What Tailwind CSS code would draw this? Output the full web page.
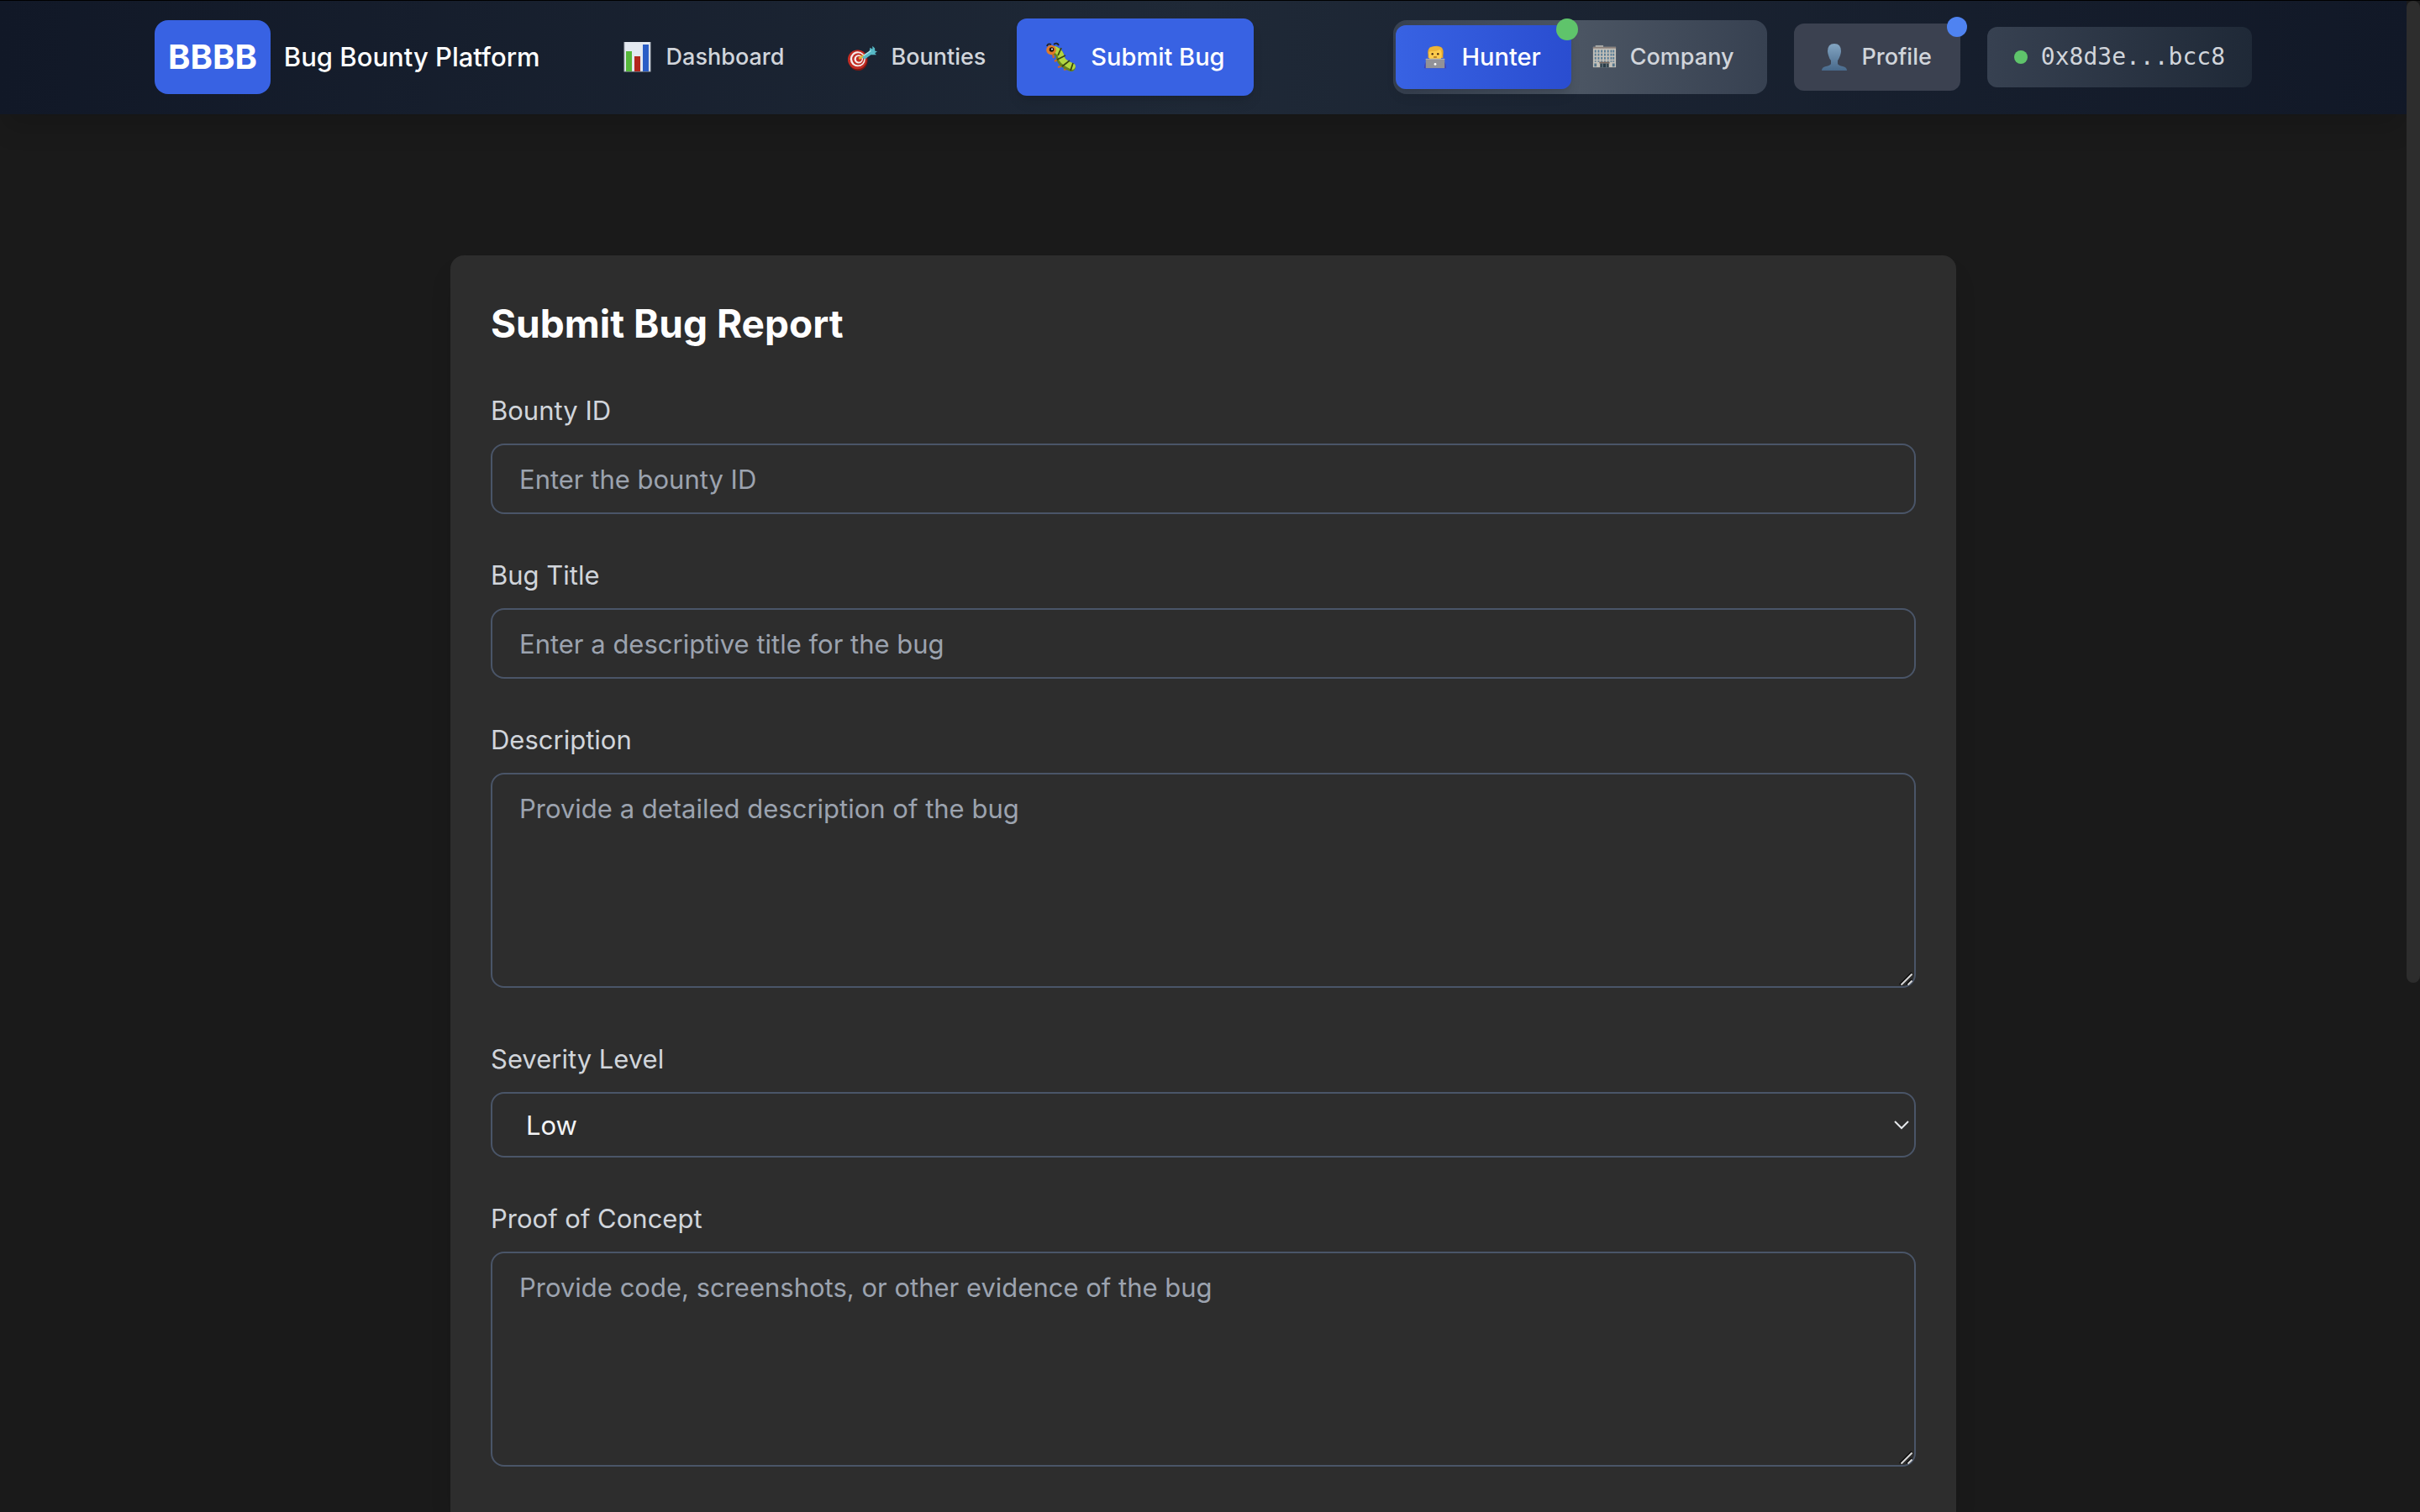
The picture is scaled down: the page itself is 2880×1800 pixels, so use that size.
<!DOCTYPE html>
<html lang="en">
<head>
<meta charset="utf-8">
<meta name="viewport" content="width=device-width, initial-scale=1">
<title>Bug Bounty Platform</title>
<script src="https://cdn.jsdelivr.net/npm/@tailwindcss/browser@4"></script>
</head>
<body class="flex h-screen overflow-hidden bg-[#1a1a1a] font-['Inter',sans-serif] text-[31px] leading-[48px] text-white">
<div class="flex min-w-0 flex-1 flex-col">
  <header class="relative z-10 border-t border-black bg-linear-to-r from-[#111827] via-[#1f2937] to-[#111827] pb-px shadow-[0_20px_30px_-6px_rgba(0,0,0,0.15)]">
    <div class="mx-auto flex h-[134px] max-w-[2560px] items-center justify-between px-8">
      <div class="flex items-center gap-[66px]">
        <a href="#" class="flex items-center gap-4">
          <span class="rounded-2xl bg-[#3862e3] px-4 py-4 text-[40px] leading-[56px] font-bold">BBBB</span>
          <span class="font-medium whitespace-nowrap">Bug Bounty Platform</span>
        </a>
        <nav class="flex items-center gap-[11px] text-[27px] leading-[40px] font-medium text-[#d1d5db]">
          <a href="#" class="flex items-center gap-4 px-8 py-6">
            <svg class="h-9 w-9" viewBox="2 3 36 36"><rect x="4" y="2" width="31" height="36" fill="#e3e9f1" stroke="#aab1ba"/><rect x="6" y="14" width="7" height="24" fill="#55b83a"/><rect x="16" y="20" width="7" height="18" fill="#b3261c"/><rect x="26" y="6" width="7" height="32" fill="#2a5dc6"/></svg>
            <span>Dashboard</span>
          </a>
          <a href="#" class="flex items-center gap-4 px-8 py-6">
            <svg class="h-9 w-9" viewBox="1 1 38 38"><ellipse cx="15" cy="24" rx="12" ry="13" fill="#7d1712"/><circle cx="14" cy="23" r="12" fill="#c22d24"/><circle cx="14.500" cy="22.500" r="9.500" fill="#f4efee"/><circle cx="15" cy="22.500" r="7.500" fill="#c22d24"/><circle cx="15.500" cy="22.500" r="5.500" fill="#f4efee"/><circle cx="16" cy="22.500" r="3.500" fill="#c22d24"/><path d="M16 22 22 18" stroke="#dfb53b" stroke-width="3"/><path d="m20 20 9-7 1-5 3 2 0-4 3 3 0 3 3 1-3 2 2 2-7 0-8 6z" fill="#57b9c6"/><path d="m22 18 9-6" stroke="#a7e6ea" stroke-width="1.500"/></svg>
            <span>Bounties</span>
          </a>
          <a href="#" class="-ml-1.5 flex items-center gap-4 rounded-xl bg-[#3862e3] px-[34px] py-[26px] text-[29px] whitespace-nowrap text-white shadow-lg">
            <svg class="h-[38px] w-[38px]" viewBox="0 0 38 38"><path d="M2 6q1-4 5-2M10 4q4-3 6 1" fill="none" stroke="#222" stroke-width="1.800"/><path d="m9 15 1 5M14 22l-3 2M19 30l-4 1M26 33l-4 1" stroke="#d46a1c" stroke-width="2.200"/><path d="M11 11Q17 13 18 20T31 31" fill="none" stroke="#66821e" stroke-width="10" stroke-linecap="round"/><path d="M12 10Q18 13 19 19T32 30" fill="none" stroke="#b2d640" stroke-width="7.500" stroke-linecap="round"/><path d="m19 8-4 9M24 17l-10 5M29 23l-9 7M33 26l-3 9" stroke="#394510" stroke-width="1.800"/><circle cx="7" cy="10.500" r="5.800" fill="#e07b28"/><circle cx="7.500" cy="10" r="2.800" fill="#1c1410"/><circle cx="8" cy="9.500" r="1" fill="#fff"/></svg>
            <span>Submit Bug</span>
          </a>
        </nav>
      </div>
      <div class="flex items-center gap-8 text-[27px] leading-[40px] font-medium text-[#d1d5db]">
        <div class="flex h-[88px] items-center rounded-2xl bg-linear-to-r from-[#374151] via-[#4b5563] to-[#374151] pr-2 pl-[3px]">
          <button type="button" class="relative flex h-[76px] items-center gap-4 rounded-xl bg-linear-to-r from-[#3862e3] to-[#2a4dd0] pr-9 pl-8 text-[29px] text-white shadow-lg">
            <svg class="h-[30px] w-[30px]" viewBox="0 0 32 32"><path d="M2 30q0-9 7-10h14q7 1 7 10z" fill="#3c41b4"/><path d="M7 13Q5 2 16 2q12-1 10 11v4H7z" fill="#e4a52b"/><path d="M8 9q8-1 14-3 3 2 2 10-1 6-8 6t-8-6z" fill="#fccb4c"/><path d="M8 8q7 2 14-2l3 3-1-5-8-2-7 2z" fill="#edb53a"/><circle cx="12.500" cy="12" r="1.300" fill="#4a2b12"/><circle cx="19.500" cy="12" r="1.300" fill="#4a2b12"/><path d="M14 16h4" stroke="#a2641b" stroke-width="1.500"/><path d="M4 18h24v12H4z" fill="#929298"/><path d="M4 18h24v1H4z" fill="#b2b2b6"/><circle cx="16" cy="25" r="1.500" fill="#fff"/></svg>
            <span>Hunter</span>
            <span class="absolute -top-2 -right-2 h-[26px] w-[26px] rounded-full bg-[#5fc46b]"></span>
          </button>
          <button type="button" class="flex h-[76px] items-center gap-4 pr-8 pl-6">
            <svg class="h-[30px] w-[30px]" viewBox="0 0 32 32"><path d="M5 1h10v4H5z" fill="#a9aaa8"/><path d="M2 3h29v26H2z" fill="#c3c0b9"/><path d="M2 3h29v2H2z" fill="#8a7f79"/><path d="M5 7v15M9 7v15M13 7v15M17 7v15M21 7v15M25 7v15M28 7v15" stroke="#557a94" stroke-width="2" stroke-dasharray="3 1.500"/><path d="M5 24v4M28 24v4" stroke="#53748b" stroke-width="3"/><path d="M10 22h13v2H10z" fill="#75655c"/><path d="M11 24h11v5H11z" fill="#293b46"/><path d="M14 24v5M19 24v5" stroke="#829098"/></svg>
            <span>Company</span>
          </button>
        </div>
        <button type="button" class="relative flex h-20 items-center gap-4 rounded-xl bg-[#3b4150] pr-[34px] pl-8">
          <svg class="h-8 w-8" viewBox="0 0 32 32"><defs><linearGradient id="bust" x1="0" y1="0" x2="0" y2="1"><stop stop-color="#83a5c2"/><stop offset="1" stop-color="#48698b"/></linearGradient></defs><path d="M16 0q8 0 8 9 0 2-1 5-2 5-3 6v4q1 2 6 3 5 1 5 5H1q0-4 5-5 5-1 6-3v-4q-2-2-3-6-1-3-1-5 0-9 8-9z" fill="url(#bust)"/></svg>
          <span>Profile</span>
          <span class="absolute -top-2 -right-2 h-6 w-6 rounded-full bg-[#4f83f1]"></span>
        </button>
        <div class="flex h-[72px] items-center gap-4 rounded-xl bg-linear-to-r from-[#374151] to-[#1f2937] px-8">
          <span class="h-4 w-4 rounded-full bg-[#5fc46b]"></span>
          <span class="font-['DejaVu_Sans_Mono',monospace] text-[28px] font-normal">0x8d3e...bcc8</span>
        </div>
      </div>
    </div>
  </header>

  <main class="flex min-h-0 flex-1 flex-col px-8 pt-[168px]">
    <form class="mx-auto flex w-full max-w-[1792px] flex-1 flex-col gap-[49px] rounded-t-2xl bg-[#2d2d2d] px-12 pt-[50px] shadow-[0_20px_30px_-6px_rgba(0,0,0,0.15)]">
      <h1 class="text-[46px] leading-[62px] font-bold">Submit Bug Report</h1>
      <div class="flex flex-col gap-[15px]">
        <label for="bounty" class="text-[#d1d5db]">Bounty ID</label>
        <input id="bounty" type="text" placeholder="Enter the bounty ID" class="h-[84px] rounded-2xl border-2 border-[#4a5568] bg-transparent px-8 placeholder:text-[#9ca3af]">
      </div>
      <div class="flex flex-col gap-[15px]">
        <label for="title" class="text-[#d1d5db]">Bug Title</label>
        <input id="title" type="text" placeholder="Enter a descriptive title for the bug" class="h-[84px] rounded-2xl border-2 border-[#4a5568] bg-transparent px-8 placeholder:text-[#9ca3af]">
      </div>
      <div class="flex flex-col gap-[15px] pb-3">
        <label for="description" class="text-[#d1d5db]">Description</label>
        <div class="relative flex">
          <textarea id="description" placeholder="Provide a detailed description of the bug" class="h-64 w-full resize-none rounded-2xl border-2 border-[#4a5568] bg-transparent px-8 py-[17px] placeholder:text-[#9ca3af]"></textarea>
          <svg class="absolute right-1 bottom-[3px] h-4 w-4" viewBox="0 0 16 16" fill="none"><path d="M1 15 15 1M9 15l6-6" stroke="#0a0a0a" stroke-width="2"/><path d="M2.500 15.500l13-13M10.500 15.500l5-5" stroke="#d8d8d8" stroke-width="2"/></svg>
        </div>
      </div>
      <div class="flex flex-col gap-[15px]">
        <label for="severity" class="text-[#d1d5db]">Severity Level</label>
        <div class="relative flex">
          <select id="severity" class="h-[78px] w-full appearance-none rounded-2xl border-2 border-[#4a5568] bg-transparent px-10 pt-0.5 text-[#f3f4f6]">
            <option>Low</option>
            <option>Medium</option>
            <option>High</option>
            <option>Critical</option>
          </select>
          <svg class="pointer-events-none absolute top-[34px] right-2 h-3 w-[18px]" viewBox="0 0 18 12" fill="none" stroke="#e5e7eb" stroke-width="2"><path d="m1 1 8 8 8-8"/></svg>
        </div>
      </div>
      <div class="flex flex-col gap-[15px]">
        <label for="proof" class="text-[#d1d5db]">Proof of Concept</label>
        <div class="relative flex">
          <textarea id="proof" placeholder="Provide code, screenshots, or other evidence of the bug" class="h-64 w-full resize-none rounded-2xl border-2 border-[#4a5568] bg-transparent px-8 py-[17px] placeholder:text-[#9ca3af]"></textarea>
          <svg class="absolute right-1 bottom-[3px] h-4 w-4" viewBox="0 0 16 16" fill="none"><path d="M1 15 15 1M9 15l6-6" stroke="#0a0a0a" stroke-width="2"/><path d="M2.500 15.500l13-13M10.500 15.500l5-5" stroke="#d8d8d8" stroke-width="2"/></svg>
        </div>
      </div>
    </form>
  </main>
</div>
<!-- scroll track -->
<div class="relative z-20 w-4 shrink-0 border-t border-black bg-[#1a1a1a]">
  <div class="h-[65%] rounded-full bg-[#2d2d2d]"></div>
</div>
</body>
</html>
